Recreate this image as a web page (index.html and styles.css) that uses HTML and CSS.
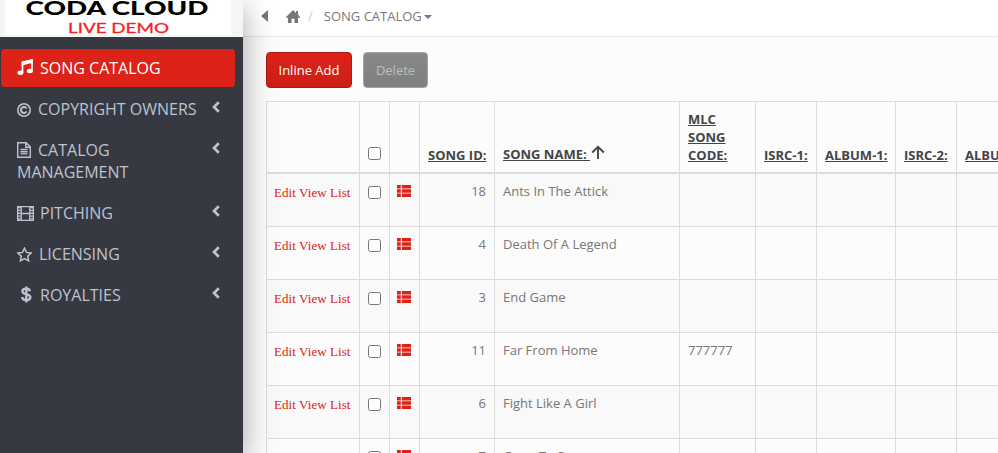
FILE: index.html
```html
<!DOCTYPE html>
<html lang="en">
<head>
  <meta charset="UTF-8" />
  <title>Song Catalog</title>
  <link rel="stylesheet" href="styles.css">
</head>
<body>

<svg class="sprite" aria-hidden="true">
  <symbol id="chevron" viewBox="0 0 8 12"><path d="M6.800 1.200L2 6l4.800 4.800" fill="none" stroke="currentColor" stroke-width="2.700"/></symbol>
  <symbol id="list" viewBox="0 0 14 12">
    <path d="M0 0h3.800v3.400H0zM4.800 0H14v3.400H4.800zM0 4.300h3.800v3.400H0zM4.800 4.300H14v3.400H4.800zM0 8.600h3.800V12H0zM4.800 8.600H14V12H4.800z" fill="currentColor"/>
  </symbol>
</svg>

<div class="page">
  <aside class="sidebar">
    <div class="brand">
      <svg class="logo" width="226" height="35" viewBox="0 0 226 35">
        <rect width="226" height="35" fill="#fff"/>
        <text class="logo-name" x="20.500" y="14.700" textLength="183" lengthAdjust="spacingAndGlyphs">CODA CLOUD</text>
        <text class="logo-sub" x="63" y="32.700" textLength="101" lengthAdjust="spacingAndGlyphs">LIVE DEMO</text>
      </svg>
    </div>
    <ul class="menu">
      <li class="active">
        <span class="label"><svg class="icon" width="16" height="17" viewBox="0 0 16 17"><path d="M5.500 13.500V3.200L15 1v10.800" fill="none" stroke="currentColor" stroke-width="1.700"/><path d="M4.700 3l11.200-2.700v3.500L4.700 6.500z" fill="currentColor"/><ellipse cx="3.400" cy="13.800" rx="3" ry="2.200" fill="currentColor"/><ellipse cx="12.900" cy="12" rx="3" ry="2.200" fill="currentColor"/></svg><span>SONG CATALOG</span></span>
      </li>
      <li>
        <span class="label"><svg class="icon" width="14" height="14" viewBox="0 0 14 14"><g fill="none" stroke="currentColor"><circle cx="7" cy="7" r="6.200" stroke-width="1.600"/><path d="M9.600 5.600A3 3 0 1 0 9.600 8.400" stroke-width="2"/></g></svg><span>COPYRIGHT OWNERS</span></span>
        <svg class="arrow" width="8" height="12"><use href="#chevron"/></svg>
      </li>
      <li>
        <span class="label"><svg class="icon" width="14" height="16" viewBox="0 0 14 16"><path d="M.7.7h8.500l4.100 4.100v10.500H.7zM8.800.7v4.500h4.500M3.500 7.500h7M3.500 9.700h7M3.500 11.900h7" fill="none" stroke="currentColor" stroke-width="1.400"/></svg><span>CATALOG<br></span>MANAGEMENT</span>
        <svg class="arrow" width="8" height="12"><use href="#chevron"/></svg>
      </li>
      <li>
        <span class="label"><svg class="icon film" width="17" height="15" viewBox="0 0 17 15"><path d="M.6.600h15.800v13.800H.6zM4.200.6v13.800M12.800.6v13.800M4 7.500h9" fill="none" stroke="currentColor" stroke-width="1.400"/><path d="M2.300 1v13.500M14.700 1v13.500" stroke="currentColor" stroke-width="2.600" stroke-dasharray="1.300 1.500"/></svg><span>PITCHING</span></span>
        <svg class="arrow" width="8" height="12"><use href="#chevron"/></svg>
      </li>
      <li>
        <span class="label"><svg class="icon" width="15" height="15" viewBox="0 0 15 15"><path d="M7.500 1.200l2 4.200 4.600.6-3.400 3.200.9 4.600-4.100-2.300-4.100 2.300.9-4.600L.9 6l4.600-.6z" fill="none" stroke="currentColor" stroke-width="1.500"/></svg><span>LICENSING</span></span>
        <svg class="arrow" width="8" height="12"><use href="#chevron"/></svg>
      </li>
      <li>
        <span class="label"><svg class="icon" width="16" height="17" viewBox="0 0 16 17"><path d="M13 5.300C12.600 3.500 11.300 2.800 9.300 2.800 7 2.800 5.400 3.800 5.400 5.300c0 4 7.900 1.800 7.900 6 0 1.800-1.600 2.800-4 2.800-2.200 0-4-.9-4.200-3.100M9.300.5v16" fill="none" stroke="currentColor" stroke-width="2.400"/></svg><span>ROYALTIES</span></span>
        <svg class="arrow" width="8" height="12"><use href="#chevron"/></svg>
      </li>
    </ul>
  </aside>

  <main class="content">
    <nav class="breadcrumb">
      <svg class="back" width="7" height="12" viewBox="0 0 7 12"><path d="M7 0v12L0 6z" fill="currentColor"/></svg>
      <svg class="home" width="14" height="13" viewBox="0 0 14 13"><path d="M7 0l3 2.900V1h2v3.800L14 7v.7h-2V13H8.500V8.800h-3V13H2V7.700H0V7z" fill="currentColor"/></svg>
      <span class="sep">/</span>
      <span class="crumb">SONG CATALOG</span>
      <span class="caret"></span>
    </nav>

    <div class="toolbar">
      <button class="btn btn-primary">Inline Add</button>
      <button class="btn btn-disabled" disabled>Delete</button>
    </div>

    <table class="grid">
      <colgroup>
        <col class="c-links"><col class="c-check"><col class="c-check"><col class="c-id"><col class="c-name">
        <col class="c-mlc"><col class="c-isrc"><col class="c-album"><col class="c-isrc"><col class="c-album">
      </colgroup>
      <thead>
        <tr>
          <th></th>
          <th><input type="checkbox"></th>
          <th></th>
          <th class="num"><a>SONG ID:</a></th>
          <th class="sorted"><a>SONG NAME: <svg class="sort" width="16" height="15" viewBox="0 0 16 15"><path d="M8 14V2M2.200 7.500L8 1.800l5.800 5.700" fill="none" stroke="currentColor" stroke-width="1.900"/></svg></a></th>
          <th><a>MLC<br>SONG<br>CODE:</a></th>
          <th><a>ISRC-1:</a></th>
          <th><a>ALBUM-1:</a></th>
          <th><a>ISRC-2:</a></th>
          <th><a>ALBUM-2:</a></th>
        </tr>
      </thead>
      <tbody></tbody>
    </table>
  </main>
</div>

<script>
const songs = [
  [18, "Ants In The Attick", ""],
  [4, "Death Of A Legend", ""],
  [3, "End Game", ""],
  [11, "Far From Home", "777777"],
  [6, "Fight Like A Girl", ""],
  [7, "Gone To Soon", ""]
];

document.querySelector(".grid tbody").innerHTML = songs.map(([id, name, code]) => `
  <tr>
    <td class="links">Edit View List</td>
    <td><input type="checkbox"></td>
    <td><svg class="list" width="14" height="12"><use href="#list"/></svg></td>
    <td class="num">${id}</td>
    <td>${name}</td>
    <td>${code}</td>
    <td></td><td></td><td></td><td></td>
  </tr>
`).join("");
</script>
</body>
</html>
```
FILE: styles.css
```css
* {
  box-sizing: border-box;
}
body {
  margin: 0;
  font-family: "Open Sans", sans-serif;
  font-size: 13px;
  color: #777;
  background: #fcfcfc;
  overflow: hidden;
}
.sprite {
  display: none;
}
.page {
  display: flex;
  height: 453px;
  overflow: hidden;
}

/* sidebar */
.sidebar {
  position: relative;
  z-index: 1;
  flex: 0 0 243px;
  background: #363942;
  box-shadow: 0 8px 30px rgba(0, 0, 0, 0.36);
}
.brand {
  height: 37px;
  padding-left: 5px;
  background: #f5f5f5;
}
.logo {
  display: block;
}
.logo-name {
  font: 900 19px Lato, sans-serif;
  fill: #000;
}
.logo-sub {
  font: 400 14px Lato, sans-serif;
  fill: #fb1c25;
  stroke: #fb1c25;
  stroke-width: 0.3px;
}
.menu {
  list-style: none;
  margin: 0;
  padding: 12px 8px 0 1px;
  display: flex;
  flex-direction: column;
  gap: 3px;
}
.menu li {
  display: flex;
  justify-content: space-between;
  padding: 8px 15px 8px 16px;
  border-radius: 4px;
  font-size: 16px;
  line-height: 22px;
  color: #bfc3ce;
}
.menu .active {
  background: #dd2218;
  color: #fff;
}
.icon {
  margin-right: 7px;
  vertical-align: -2px;
}
.film {
  margin-right: 6px;
}
.arrow {
  margin-top: 3px;
}

/* content */
.content {
  flex: 1;
  min-width: 0;
}
.breadcrumb {
  display: flex;
  align-items: center;
  height: 37px;
  padding: 0 0 4px 18px;
  background: #fff;
  border-bottom: 1px solid #e7e7e7;
}
.home {
  margin-left: 18px;
}
.sep {
  margin-left: 8px;
  color: #ccc;
}
.crumb {
  margin-left: 11px;
}
.caret {
  margin: 2px 0 0 2px;
  border: 4px solid transparent;
  border-top-color: #777;
  border-bottom: 0;
}
.toolbar {
  display: flex;
  gap: 11px;
  padding: 15px 0 13px 23px;
}
.btn {
  height: 36px;
  padding: 0;
  border-radius: 4px;
  font: 13px "Open Sans", sans-serif;
}
.btn-primary {
  width: 86px;
  border: 1px solid #a91a12;
  background: linear-gradient(#dd2218, #cb1f16);
  color: #fff;
}
.btn-disabled {
  width: 65px;
  border: 1px solid #a3a5a4;
  background: linear-gradient(#888a89, #7e807f);
  color: #bcbebd;
}

/* grid */
.grid {
  table-layout: fixed;
  width: 769px;
  margin-left: 23px;
  border-spacing: 0;
  border-top: 1px solid #ddd;
}
.c-links { width: 93px; }
.c-check { width: 30px; }
.c-id { width: 75px; }
.c-name { width: 185px; }
.c-mlc { width: 76px; }
.c-isrc { width: 61px; }
.c-album { width: 79px; }
.grid th,
.grid td {
  padding: 8px;
  border-left: 1px solid #ddd;
  border-bottom: 1px solid #ddd;
  line-height: 18px;
  text-align: left;
  vertical-align: top;
  white-space: nowrap;
}
.grid th {
  height: 72px;
  border-bottom-width: 2px;
  vertical-align: bottom;
  color: #444;
}
.grid th a {
  text-decoration: underline;
}
.grid .sorted {
  padding-bottom: 9px;
}
.grid td {
  height: 53px;
}
.grid tbody tr:nth-child(odd) {
  background: #f9f9f9;
}
.grid .num {
  text-align: right;
}
.grid .links {
  padding: 10px 0 0 7px;
  font: 13px/18px "Liberation Serif", serif;
  letter-spacing: 0.070px;
  color: #dd2218;
}
.grid input {
  display: block;
  width: 13px;
  height: 13px;
  margin: 4px 0 4px 0;
}
.list {
  display: block;
  margin-top: 3px;
  margin-left: -1px;
  color: #dd2218;
}
.sort {
  vertical-align: -1px;
}
```
